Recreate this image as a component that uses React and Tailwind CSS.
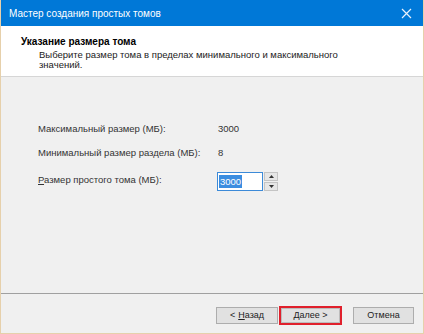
import React from 'react';

const font = { fontFamily: '"Liberation Sans", Arial, sans-serif' };

const btnBase = 'h-[17px] bg-[#e1e1e1] border border-[#adadad] flex items-center justify-center text-[9px] text-[#222] whitespace-nowrap';

const App = () => {
    return (
        <div className="w-[424px] h-[334px] flex flex-col border-x border-b border-[#e6d0ab] bg-[#f0f0f0]" style={font}>
            <div className="h-[26px] bg-[#0078d7] flex items-center justify-between pl-[8px] pr-[10px] text-white">
                <span className="text-[10px]">Мастер создания простых томов</span>
                <svg width="11" height="11" viewBox="0 0 11 11" className="mr-[1px]">
                    <path d="M1 1 L10 10 M10 1 L1 10" stroke="#e8f1fb" strokeWidth="1.2" />
                </svg>
            </div>
            <div className="h-[51px] bg-white border-b border-[#d6d6d6] pt-[9px] pl-[20px]">
                <div className="text-[10px] font-bold text-black leading-[13px]">Указание размера тома</div>
                <div className="pl-[18px] text-[9.5px] text-[#222] leading-[10px] mt-[2px] whitespace-nowrap">
                    Выберите размер тома в пределах минимального и максимального
                    <br />
                    значений.
                </div>
            </div>
            <div className="flex-1 pt-[45px] pl-[37px] text-[9.5px] text-[#333] whitespace-nowrap">
                <div className="flex items-center h-[14px]">
                    <span className="w-[180px]">Максимальный размер (МБ):</span>
                    <span>3000</span>
                </div>
                <div className="flex items-center h-[14px] mt-[10px]">
                    <span className="w-[180px]">Минимальный размер раздела (МБ):</span>
                    <span>8</span>
                </div>
                <div className="flex items-start mt-[12px]">
                    <span className="w-[179px] mt-[1px]">
                        <span className="underline">Р</span>азмер простого тома (МБ):
                    </span>
                    <div className="w-[46px] h-[19px] bg-white border border-[#3c8ad8] flex items-center pl-[1px]">
                        <span className="bg-[#3b8de0] text-white leading-[13px] px-[1px]">3000</span>
                    </div>
                    <div className="ml-[1px] flex flex-col gap-[1px]">
                        <div className="w-[14px] h-[9px] bg-[#e6e6e6] border border-[#c4c4c4] flex items-center justify-center">
                            <svg width="5" height="3" viewBox="0 0 5 3"><path d="M2.5 0 L5 3 L0 3 Z" fill="#333" /></svg>
                        </div>
                        <div className="w-[14px] h-[9px] bg-[#e6e6e6] border border-[#c4c4c4] flex items-center justify-center">
                            <svg width="5" height="3" viewBox="0 0 5 3"><path d="M0 0 L5 0 L2.5 3 Z" fill="#333" /></svg>
                        </div>
                    </div>
                </div>
            </div>
            <div className="h-[40px] border-t border-[#a0a0a0] flex items-start justify-end pt-[12px] pr-[9px]">
                <div className="flex items-center">
                    <div className={`${btnBase} w-[62px]`}>
                        &lt; <span className="underline ml-[3px]">Н</span>азад
                    </div>
                    <div className="ml-[1px] w-[63px] h-[19px] border-2 border-[#e0202c] flex">
                        <div className={`${btnBase} flex-1 h-full border-[#bcbcbc]`}>
                            <span className="underline">Д</span>алее &gt;
                        </div>
                    </div>
                    <div className={`${btnBase} w-[61px] ml-[11px]`}>Отмена</div>
                </div>
            </div>
        </div>
    );
};

export default App;
